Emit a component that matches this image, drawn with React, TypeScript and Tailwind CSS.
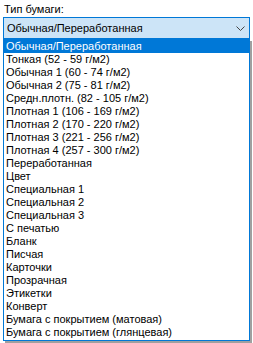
import React from 'react'

const items = [
    'Обычная/Переработанная',
    'Тонкая (52 - 59 г/м2)',
    'Обычная 1 (60 - 74 г/м2)',
    'Обычная 2 (75 - 81 г/м2)',
    'Средн.плотн. (82 - 105 г/м2)',
    'Плотная 1 (106 - 169 г/м2)',
    'Плотная 2 (170 - 220 г/м2)',
    'Плотная 3 (221 - 256 г/м2)',
    'Плотная 4 (257 - 300 г/м2)',
    'Переработанная',
    'Цвет',
    'Специальная 1',
    'Специальная 2',
    'Специальная 3',
    'С печатью',
    'Бланк',
    'Писчая',
    'Карточки',
    'Прозрачная',
    'Этикетки',
    'Конверт',
    'Бумага с покрытием (матовая)',
    'Бумага с покрытием (глянцевая)',
]

export default function App() {
    const selected = 0

    return (
        <div className="w-[253px] h-[343px] bg-white overflow-hidden text-[11px] leading-[13px] text-black font-['Liberation_Sans',Arial,sans-serif]">
            <div className="pl-[4px] pt-[3px] h-[17px]">Тип бумаги:</div>

            <div className="ml-[3px] w-[247px] h-[22px] border border-[#0078d7] bg-[#cce4f7] flex items-center justify-between pl-[3px] pr-[4px]">
                <span>Обычная/Переработанная</span>
                <svg width="9" height="5" viewBox="0 0 9 5" fill="none">
                    <path d="M0.5 0.5 L4.5 4.5 L8.5 0.5" stroke="#444" strokeWidth="1" />
                </svg>
            </div>

            <div className="ml-[3px] w-[247px] border border-[#0078d7] bg-white pb-[1px] shadow-[2px_2px_0_#a0a0a0]">
                {items.map((it, i) => (
                    <div
                        key={it}
                        className={`h-[13px] pl-[2px] whitespace-nowrap ${i === selected ? 'bg-[#0078d7] text-white' : ''}`}
                    >
                        {it}
                    </div>
                ))}
            </div>
        </div>
    )
}
